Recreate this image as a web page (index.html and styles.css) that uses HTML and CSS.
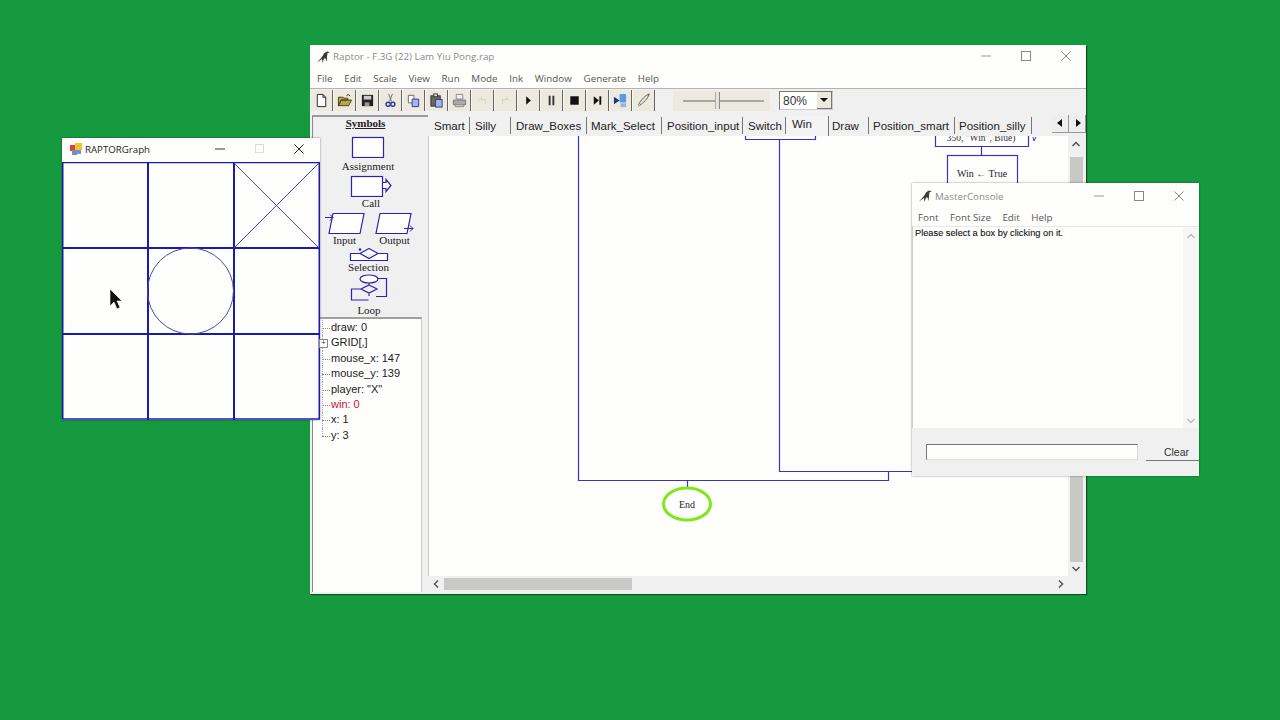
FILE: index.html
```html
<!DOCTYPE html>
<html lang="en">
<head>
<meta charset="utf-8">
<title>Raptor</title>
<link rel="stylesheet" href="styles.css">
</head>
<body>
<main class="desktop">

<section class="win raptor">
  <header class="titlebar raptor-title">
    <svg class="bird" viewBox="0 0 14 14"><path d="M0 12.500L5 7 7 3.500 9 2l1.500-.5L13 2.500 10.500 3 10 7 9.500 12 8.500 8.500H7L5.500 13 5 9z" fill="#3a3a3a"/></svg>
    <span class="title-text">Raptor - F.3G (22) Lam Yiu Pong.rap</span>
    <div class="caps">
      <svg class="cap" viewBox="0 0 40 22"><path d="M15 11h10" stroke="#999" fill="none"/></svg>
      <svg class="cap" viewBox="0 0 40 22"><rect x="15.500" y="6.500" width="9" height="9" stroke="#888" fill="none"/></svg>
      <svg class="cap" viewBox="0 0 40 22"><path d="M15.500 6.500l9 9M24.500 6.500l-9 9" stroke="#888" fill="none"/></svg>
    </div>
  </header>
  <nav class="menu raptor-menu">
    <span>File</span><span>Edit</span><span>Scale</span><span>View</span><span>Run</span><span>Mode</span><span>Ink</span><span>Window</span><span>Generate</span><span>Help</span>
  </nav>
  <div class="toolbar">
    <span class="tb"><svg viewBox="0 0 16 16"><path d="M3.500 1.500h6l3 3v10h-9z M9.500 1.500v3h3" fill="#fff" stroke="#222"/></svg></span>
    <span class="tb"><svg viewBox="0 0 16 16"><path d="M1.500 13.500v-9h5l1 1h4v2H4.500l-3 6 3-6h11l-3 6z" fill="#b9a648" stroke="#4a4218"/><path d="M10 3l2-1.500 2 2" stroke="#222" fill="none"/></svg></span>
    <span class="tb"><svg viewBox="0 0 16 16"><rect x="2" y="2" width="12" height="12" fill="#222"/><rect x="4" y="3" width="8" height="4" fill="#ccc"/><rect x="5" y="10" width="5" height="4" fill="#999"/></svg></span>
    <span class="tb"><svg viewBox="0 0 16 16"><path d="M6 1l3 8M10 1L7 9" stroke="#666" fill="none"/><circle cx="5.500" cy="12" r="2.200" fill="none" stroke="#33339a" stroke-width="1.500"/><circle cx="10.500" cy="12" r="2.200" fill="none" stroke="#33339a" stroke-width="1.500"/></svg></span>
    <span class="tb"><svg viewBox="0 0 16 16"><path d="M2.500 2.500h6v8h-6z" fill="#fff" stroke="#666"/><path d="M6.500 6.500h7v8h-7z" fill="#aab4e6" stroke="#33339a"/></svg></span>
    <span class="tb"><svg viewBox="0 0 16 16"><rect x="2" y="3" width="10" height="11" fill="#6d6a52" stroke="#333"/><rect x="5" y="1" width="4" height="3" fill="#ddd" stroke="#333"/><rect x="7" y="7" width="7" height="8" fill="#aab4e6" stroke="#33339a"/></svg></span>
    <span class="tb"><svg viewBox="0 0 16 16"><path d="M4.500 1.500h7v5h-7z" fill="#eee" stroke="#888"/><path d="M1.500 7.500h13v5h-13z" fill="#aaa" stroke="#777"/><path d="M3.500 12.500h9v2h-9z" fill="#ddd" stroke="#888"/></svg></span>
    <span class="tb"><svg viewBox="0 0 16 16"><path d="M4 8l3-3v2h4v5" fill="none" stroke="#d4d0c0"/></svg></span>
    <span class="tb"><svg viewBox="0 0 16 16"><path d="M12 8L9 5v2H5v5" fill="none" stroke="#d4d0c0"/></svg></span>
    <span class="tb"><svg viewBox="0 0 16 16"><path d="M5.500 3.500l5 4.500-5 4.500z" fill="#111"/></svg></span>
    <span class="tb"><svg viewBox="0 0 16 16"><path d="M5 3h2v10H5zM9 3h2v10H9z" fill="#333"/></svg></span>
    <span class="tb"><svg viewBox="0 0 16 16"><rect x="3.500" y="3.500" width="9" height="9" fill="#111"/></svg></span>
    <span class="tb"><svg viewBox="0 0 16 16"><path d="M4 3.500l5.500 4.500L4 12.500z" fill="#111"/><rect x="10" y="3.500" width="2" height="9" fill="#111"/></svg></span>
    <span class="tb"><svg viewBox="0 0 16 16"><rect x="7" y="1" width="7" height="9" rx="1" fill="#5b9be0"/><rect x="8" y="11" width="6" height="4" fill="#8fb6d8"/><path d="M1 4l6 4-6 4z" fill="#1a3a80"/></svg></span>
    <span class="tb"><svg viewBox="0 0 18 18"><path d="M16 1C11 3 6 8 3 14l1 1C9 12 14 7 16 1z" fill="#f0eee0" stroke="#444"/><path d="M2 17l2-3 1 1z" fill="#c89a2a"/></svg></span>
    <div class="slider"><span class="slider-line"></span><span class="slider-thumb"></span></div>
    <div class="combo"><span class="combo-val">80%</span><span class="combo-btn"></span></div>
  </div>
  <div class="raptor-body">
    <aside class="side">
      <div class="palette">
        <h2 class="pal-head">Symbols</h2>
        <div class="sym sym-assign">
          <svg class="s-assign" viewBox="0 0 34 22"><rect x="1.500" y="1.500" width="31" height="20" fill="#fff" stroke="#2a22b8" stroke-width="1.200"/></svg>
          <span>Assignment</span>
        </div>
        <div class="sym sym-call">
          <svg class="s-call" viewBox="0 0 42 22"><rect x="1.500" y="1.500" width="31" height="20" fill="#fff" stroke="#2a22b8" stroke-width="1.200"/><path d="M33 7.500h3V4.500l5 6-5 6v-3h-3" fill="#fff" stroke="#2a22b8" stroke-width="1.200"/></svg>
          <span>Call</span>
        </div>
        <div class="sym-row">
          <div class="sym">
            <svg class="s-io" viewBox="0 0 40 22"><path d="M9 1.500h31l-4 20H5z" transform="translate(-1 0)" fill="#fff" stroke="#2a22b8" stroke-width="1.200"/><path d="M0 5.500h8M5 2.500l3 3-3 3" fill="none" stroke="#2a22b8"/></svg>
            <span>Input</span>
          </div>
          <div class="sym">
            <svg class="s-io" viewBox="0 0 40 22"><path d="M5 1.500h31l-4 20H1z" fill="#fff" stroke="#2a22b8" stroke-width="1.200"/><path d="M29 16.500h9M35 13.500l3 3-3 3" fill="none" stroke="#2a22b8"/></svg>
            <span>Output</span>
          </div>
        </div>
        <div class="sym sym-sel">
          <svg class="s-sel" viewBox="0 0 40 13"><path d="M11 5.500H1.500v7h37v-7H29M20 .5l9 5-9 5-9-5z" fill="#fff" stroke="#2a22b8" stroke-width="1.200"/><circle cx="11" cy="1.500" r="1.300" fill="#2a22b8"/></svg>
          <span>Selection</span>
        </div>
        <div class="sym sym-loop">
          <svg class="s-loop" viewBox="0 0 38 27"><ellipse cx="19" cy="5" rx="9" ry="4" fill="#fff" stroke="#2a22b8" stroke-width="1.200"/><path d="M28 4.500h8.500v18H26M19 9v2M19 11l8 4-8 4-8-4zM11 15H1.500v11h17M19 19v3" fill="none" stroke="#2a22b8" stroke-width="1.200"/></svg>
          <span>Loop</span>
        </div>
      </div>
      <ul class="tree">
        <li>draw: 0</li>
        <li class="branch">GRID[,]</li>
        <li>mouse_x: 147</li>
        <li>mouse_y: 139</li>
        <li>player: "X"</li>
        <li class="changed">win: 0</li>
        <li>x: 1</li>
        <li>y: 3</li>
      </ul>
    </aside>
    <div class="main">
      <div class="tabs">
        <span class="tab t-smart">Smart</span>
        <span class="tab t-silly">Silly</span>
        <span class="tab t-draw-boxes">Draw_Boxes</span>
        <span class="tab t-mark">Mark_Select</span>
        <span class="tab t-pinput">Position_input</span>
        <span class="tab t-switch">Switch</span>
        <span class="tab active">Win</span>
        <span class="tab t-draw">Draw</span>
        <span class="tab t-psmart">Position_smart</span>
        <span class="tab t-psilly">Position_silly</span>
        <div class="tab-arrows">
          <span class="ta"><svg viewBox="0 0 16 16"><path d="M10 4v8L5 8z" fill="#111"/></svg></span>
          <span class="ta"><svg viewBox="0 0 16 16"><path d="M7 4v8l5-4z" fill="#111"/></svg></span>
        </div>
      </div>
      <div class="work">
        <div class="canvas-row">
          <div class="canvas">
            <svg class="flow" viewBox="429 136 639 440">
              <g fill="none" stroke="#3a30c8" stroke-width="1.200">
                <path d="M745.500 134v5.500h70V134"/>
                <path d="M779.500 139v332.500H920"/>
                <path d="M578.500 134v346.500h310V471"/>
                <path d="M687.500 480v7"/>
                <path d="M935.500 134v12.500h93V134"/>
                <path d="M981.500 146v9"/>
                <rect x="947.500" y="155.500" width="70" height="40"/>
                <path d="M1033 137l1 4 2-4" stroke-width="1"/>
              </g>
              <text class="ft" x="981" y="141" text-anchor="middle">350, "Win", Blue)</text>
              <text class="ft ft-lg" x="982" y="177" text-anchor="middle">Win ← True</text>
              <ellipse cx="687" cy="504" rx="23.500" ry="16" fill="#fff" stroke="#7fe81a" stroke-width="3"/>
              <text class="ft ft-lg" x="687" y="508" text-anchor="middle">End</text>
            </svg>
          </div>
          <div class="vbar">
            <svg class="chev" viewBox="0 0 10 6"><path d="M1.500 5L5 1.500 8.500 5" fill="none" stroke="#555" stroke-width="1.500"/></svg>
            <div class="vtrack"><div class="vthumb"></div></div>
            <svg class="chev" viewBox="0 0 10 6"><path d="M1.500 1L5 4.500 8.500 1" fill="none" stroke="#555" stroke-width="1.500"/></svg>
          </div>
        </div>
        <div class="hbar">
          <svg class="chev-h" viewBox="0 0 6 10"><path d="M5 1.500L1.500 5 5 8.500" fill="none" stroke="#555" stroke-width="1.500"/></svg>
          <div class="htrack"><div class="hthumb"></div></div>
          <svg class="chev-h" viewBox="0 0 6 10"><path d="M1 1.500L4.500 5 1 8.500" fill="none" stroke="#555" stroke-width="1.500"/></svg>
        </div>
      </div>
    </div>
  </div>
</section>

<section class="win graph">
  <header class="titlebar graph-title">
    <svg class="app-ico" viewBox="0 0 12 12"><rect x="0" y="2" width="6" height="6" fill="#d8433b"/><rect x="5" y="0" width="7" height="7" fill="#f0c23a"/><rect x="2" y="7" width="5" height="5" fill="#7a8fb0"/><rect x="7" y="7" width="4" height="4" fill="#5b9be0"/></svg>
    <span class="graph-text">RAPTORGraph</span>
    <div class="caps">
      <svg class="cap" viewBox="0 0 40 22"><path d="M15 11h10" stroke="#333" fill="none"/></svg>
      <svg class="cap" viewBox="0 0 40 22"><rect x="15.500" y="6.500" width="8" height="8" stroke="#ddd" fill="none"/></svg>
      <svg class="cap" viewBox="0 0 40 22"><path d="M14.500 6.500l9 9M23.500 6.500l-9 9" stroke="#222" fill="none"/></svg>
    </div>
  </header>
  <svg class="board" viewBox="62 162 258 258">
    <g fill="none" stroke="#1a1ab0">
      <rect x="62.750" y="162.500" width="256.500" height="256.500" stroke-width="1.500"/>
      <path d="M148 162v258M234 162v258M62 248h258M62 334h258" stroke-width="2"/>
    </g>
    <g fill="none" stroke="#4a48a8" stroke-width="1">
      <path d="M234 163l85 85M319 163l-85 85"/>
      <circle cx="190.500" cy="291" r="43"/>
    </g>
  </svg>
</section>

<section class="win console">
  <header class="titlebar console-title">
    <svg class="bird" viewBox="0 0 14 14"><path d="M0 12.500L5 7 7 3.500 9 2l1.500-.5L13 2.500 10.500 3 10 7 9.500 12 8.500 8.500H7L5.500 13 5 9z" fill="#3a3a3a"/></svg>
    <span class="title-text">MasterConsole</span>
    <div class="caps">
      <svg class="cap" viewBox="0 0 40 22"><path d="M15 11h10" stroke="#999" fill="none"/></svg>
      <svg class="cap" viewBox="0 0 40 22"><rect x="15.500" y="6.500" width="9" height="9" stroke="#888" fill="none"/></svg>
      <svg class="cap" viewBox="0 0 40 22"><path d="M15.500 6.500l9 9M24.500 6.500l-9 9" stroke="#888" fill="none"/></svg>
    </div>
  </header>
  <nav class="menu console-menu"><span>Font</span><span>Font Size</span><span>Edit</span><span>Help</span></nav>
  <div class="output">
    <p class="out-text">Please select a box by clicking on it.</p>
    <div class="out-bar">
      <svg class="chev" viewBox="0 0 10 6"><path d="M1.500 5L5 1.500 8.500 5" fill="none" stroke="#bbb" stroke-width="1.500"/></svg>
      <svg class="chev" viewBox="0 0 10 6"><path d="M1.500 1L5 4.500 8.500 1" fill="none" stroke="#bbb" stroke-width="1.500"/></svg>
    </div>
  </div>
  <div class="input-row">
    <span class="cmd"></span>
    <span class="clear">Clear</span>
  </div>
</section>

<svg class="cursor" viewBox="0 0 12 20"><path d="M1 0v17l4-4 3 7 3-1.500-3-6.500h5z" fill="#111" stroke="#fff" stroke-width=".6"/></svg>

</main>
</body>
</html>
```

FILE: styles.css
```css
* { box-sizing: border-box; }
html, body { margin: 0; padding: 0; }
body { width: 1280px; height: 720px; overflow: hidden; background: #169a3f; font-family: "Liberation Sans", Arial, sans-serif; }
.desktop { position: relative; width: 1280px; height: 720px; }

.win { position: absolute; display: flex; flex-direction: column; background: #f0f0f0; box-shadow: 0 0 2px rgba(0,0,0,.45); }
.raptor { left: 310px; top: 45px; width: 776px; height: 549px; box-shadow: 1px 1px 1px rgba(0,0,0,.5); }
.graph { left: 62px; top: 138px; width: 258px; height: 282px; background: #fefefd; }
.console { left: 912px; top: 183px; width: 287px; height: 293px; }

.titlebar { display: flex; align-items: center; background: #fefefd; flex: none; }
.raptor-title { height: 23px; padding-left: 7px; }
.graph-title { height: 24px; padding: 0 0 2px 8px; }
.console-title { height: 26px; padding-left: 7px; }
.bird { width: 14px; height: 14px; flex: none; margin-right: 2px; }
.title-text { font-family: "Open Sans", sans-serif; font-size: 9.800px; color: #8b8b8b; }
.graph-text { font-family: "Open Sans", sans-serif; font-size: 9.700px; color: #222; margin-left: 3px; }
.app-ico { width: 12px; height: 12px; flex: none; }
.caps { margin-left: auto; display: flex; }
.raptor-title .caps { margin-top: -2px; }
.cap { width: 40px; height: 22px; display: block; }

.menu { display: flex; background: #fefefd; flex: none; font-family: "Open Sans", sans-serif; font-size: 9.800px; color: #555; align-items: center; }
.raptor-menu { padding-left: 7px; gap: 11.700px; border-bottom: 1px solid #b4b4b4; height: 21px; }
.console-menu { height: 17px; padding-left: 6px; gap: 11.500px; }

.toolbar { display: flex; align-items: center; height: 23px; flex: none; background: #f0f0f0; }
.tb { width: 23px; height: 21px; display: flex; align-items: center; justify-content: center; background: #ece9df; border-left: 1px solid #f8f8f4; border-right: 1px solid #666; flex: none; }
.tb svg { width: 15px; height: 15px; display: block; }
.slider { position: relative; width: 97px; height: 20px; margin-left: 18px; background: #ece9df; flex: none; }
.slider-line { position: absolute; left: 10px; right: 6px; top: 9px; height: 2px; background: #a8a8a0; }
.slider-thumb { position: absolute; left: 42px; top: 1px; width: 5px; height: 17px; background: #e6e4da; border-left: 1px solid #aaa; border-right: 1px solid #888; }
.combo { display: flex; width: 54px; height: 19px; margin-left: 9px; background: #fff; border: 1px solid #777; border-bottom-color: #ccc; border-right-color: #ccc; flex: none; font-size: 12px; color: #333; align-items: center; }
.combo-val { flex: 1; padding-left: 3px; }
.combo-btn { width: 15px; height: 17px; background: #ece9df; border-right: 1px solid #777; border-bottom: 1px solid #777; position: relative; }
.combo-btn::after { content: ""; position: absolute; left: 3px; top: 6px; border: 4px solid transparent; border-top-color: #111; border-bottom: 0; }

.raptor-body { flex: 1; display: flex; min-height: 0; padding: 3px 2px 2px 2px; }
.side { width: 116px; flex: none; display: flex; flex-direction: column; border-top: 2px solid #9a9a9a; border-left: 1px solid #8a8a8a; padding-right: 6px; }
.palette { height: 200px; flex: none; display: flex; flex-direction: column; align-items: center; font-family: "Liberation Serif", serif; font-size: 11px; color: #222; padding-left: 1px; }
.pal-head { margin: 0 0 6px; font-size: 11px; line-height: 13px; text-decoration: underline; font-weight: bold; padding-right: 5px; }
.sym { display: flex; flex-direction: column; align-items: center; line-height: 13px; }
.sym svg { display: block; }
.s-assign { width: 34px; height: 22px; margin: 0 0 2px -1px; }
.sym-assign { margin-bottom: 2px; }
.s-call { width: 42px; height: 22px; }
.sym-call { margin-left: 6px; margin-bottom: 2px; }
.sym-row { display: flex; gap: 10px; padding-left: 3px; margin-bottom: 1px; }
.s-io { width: 40px; height: 22px; }
.s-sel { width: 40px; height: 13px; }
.sym-sel { margin-left: 1px; }
.s-loop { width: 38px; height: 27px; margin-bottom: 3px; }
.sym-loop { margin-left: 2px; }

.tree { flex: 1; list-style: none; margin: 0; padding: 1px 0 0 18px; background: #fefefd; border-top: 2px solid #a0a0a0; border-right: 1px solid #ccc; font-size: 11px; color: #222; }
.tree li { height: 15.400px; line-height: 15.400px; position: relative; }
.tree li::before { content: ""; position: absolute; left: -9px; top: 8px; width: 8px; border-top: 1px dotted #888; }
.tree li::after { content: ""; position: absolute; left: -9px; top: 0; height: 100%; border-left: 1px dotted #aaa; }
.tree li:last-child::after { height: 8px; }
.tree li.changed { color: #c8102e; }
.tree li.branch::before { content: "+"; left: -12px; width: 7px; height: 7px; top: 4px; border: 1px solid #888; background: #fff; font-size: 7px; line-height: 5px; text-align: center; z-index: 1; }

.main { flex: 1; min-width: 0; display: flex; flex-direction: column; }
.tabs { height: 21px; flex: none; display: flex; align-items: flex-start; padding-top: 2px; font-size: 11.500px; color: #222; }
.tab { flex: none; height: 17px; line-height: 18px; border-right: 1px solid #777; }
.t-smart { width: 42px; padding-left: 6px; }
.t-silly { width: 41px; padding-left: 5px; }
.t-draw-boxes { width: 76px; padding-left: 5px; }
.t-mark { width: 75px; padding-left: 4px; }
.t-pinput { width: 81px; padding-left: 5px; }
.t-switch { width: 43px; padding-left: 5px; }
.active { width: 43px; height: 20px; line-height: 17px; margin-top: -1px; background: #f4f4f4; padding-left: 6px; }
.t-draw { width: 40px; padding-left: 3px; }
.t-psmart { width: 86px; padding-left: 4px; }
.t-psilly { width: 77px; padding-left: 4px; }
.tab-arrows { margin: -2px -2px 0 auto; display: flex; }
.ta { width: 17px; height: 18px; background: #eee; border-right: 1px solid #999; border-bottom: 1px solid #999; }
.ta svg { display: block; width: 16px; height: 16px; }

.work { flex: 1; min-height: 0; display: flex; flex-direction: column; }
.canvas-row { flex: 1; display: flex; min-height: 0; }
.canvas { flex: 1; background: #fefefd; position: relative; overflow: hidden; border-left: 1px solid #c8c8c8; }
.flow { display: block; width: 639px; height: 440px; }
.ft { font-family: "Liberation Serif", serif; font-size: 9.500px; fill: #333; }
.ft-lg { font-size: 10px; fill: #222; }
.vbar { width: 16px; flex: none; display: flex; flex-direction: column; align-items: center; background: #f0f0f0; padding: 5px 0 4px; }
.vtrack { flex: 1; width: 100%; padding: 10px 1px 4px 2px; }
.vthumb { height: 100%; background: #c8c8c6; }
.chev { width: 10px; height: 6px; display: block; flex: none; }
.hbar { height: 16px; flex: none; display: flex; align-items: center; background: #f0f0f0; padding: 0 20px 0 5px; }
.chev-h { width: 6px; height: 10px; display: block; flex: none; }
.htrack { flex: 1; height: 100%; padding: 2px 0 2px 5px; }
.hthumb { width: 188px; height: 12px; background: #c8c8c6; }

.output { flex: 1; min-height: 0; display: flex; background: #fefefd; border-left: 1px solid #ccc; border-top: 1px solid #e8e8e8; }
.out-text { flex: 1; margin: 0; padding: 1px 0 0 2px; font-size: 9.250px; line-height: 11px; color: #111; -webkit-text-stroke: .1px #111; }
.out-bar { width: 16px; flex: none; display: flex; flex-direction: column; justify-content: space-between; align-items: center; background: #f6f6f4; padding: 6px 0 4px; }
.input-row { height: 48px; flex: none; display: flex; align-items: center; padding-left: 14px; }
.cmd { width: 212px; height: 16px; background: #fefefd; border: 1px solid #ddd; border-top: 1px solid #777; border-left: 1px solid #777; }
.clear { flex: 1; margin-left: 8px; height: 18px; display: flex; align-items: center; justify-content: flex-end; padding-right: 10px; font-size: 10.500px; color: #333; border-bottom: 1px solid #777; background: #f0f0f0; }

.cursor { position: absolute; left: 109px; top: 289px; width: 12px; height: 20px; }
```
